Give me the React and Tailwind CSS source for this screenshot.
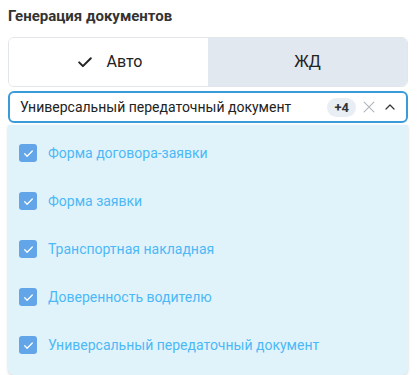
import { useState } from 'react'

const docs = [
  'Форма договора-заявки',
  'Форма заявки',
  'Транспортная накладная',
  'Доверенность водителю',
  'Универсальный передаточный документ',
]

const CheckIcon = ({ className }) => (
  <svg viewBox="0 0 24 24" className={className} fill="none" stroke="currentColor" strokeWidth={2.4} strokeLinecap="round" strokeLinejoin="round">
    <path d="M5 12.5l4.5 4.5L19 7.5" />
  </svg>
)

export default function App() {
  const [mode, setMode] = useState('auto')
  const [checked, setChecked] = useState(docs.map(() => true))

  return (
    <div className="w-[417px] h-[375px] bg-white px-2 pt-[5px]" style={{ fontFamily: 'Roboto, "Noto Sans", sans-serif' }}>
      <h2 className="text-[15px] font-bold text-[#333] leading-[22px]">Генерация документов</h2>

      {/* mode toggle */}
      <div className="mt-[10px] flex h-[50px] w-[400px] rounded-md overflow-hidden border border-[#e2e6ea]">
        <button
          onClick={() => setMode('auto')}
          className="flex-1 flex items-center justify-center gap-3 bg-white text-[16px] text-[#222]"
        >
          <CheckIcon className="w-5 h-5 text-[#222]" />
          Авто
        </button>
        <button
          onClick={() => setMode('rail')}
          className="flex-1 flex items-center justify-center bg-[#e2e8f0] text-[16px] text-[#222]"
        >
          ЖД
        </button>
      </div>

      {/* select */}
      <div className="mt-[4px] w-[400px] h-[32px] flex items-center rounded-md border-2 border-[#3a9bd8] pl-[10px] pr-2">
        <span className="flex-1 text-[14px] text-[#222] truncate">Универсальный передаточный документ</span>
        <span className="px-[7px] h-[19px] leading-[19px] rounded-full bg-[#e8eef4] text-[13px] font-bold text-[#333]">+4</span>
        <svg viewBox="0 0 24 24" className="w-[18px] h-[18px] ml-[4px] text-[#b0b6bc]" fill="none" stroke="currentColor" strokeWidth={1.5} strokeLinecap="round">
          <path d="M5.5 5.5l13 13M18.5 5.5l-13 13" />
        </svg>
        <svg viewBox="0 0 24 24" className="w-[16px] h-[16px] ml-[4px] text-[#333]" fill="none" stroke="currentColor" strokeWidth={1.8} strokeLinecap="round" strokeLinejoin="round">
          <path d="M6 15l6-6 6 6" />
        </svg>
      </div>

      {/* dropdown */}
      <div className="mt-[2px] w-[400px] rounded-b-md bg-[#e1f3fa] shadow-[0_1px_3px_rgba(0,0,0,0.18)] pt-[4px] pb-[6px]">
        {docs.map((d, i) => (
          <label key={d} className="flex items-center h-[48px] pl-[11px] gap-[11px] cursor-pointer">
            <span
              onClick={() => setChecked(c => c.map((v, j) => (j === i ? !v : v)))}
              className="w-[18px] h-[18px] rounded-[3px] bg-[#62a5e8] flex items-center justify-center"
            >
              {checked[i] && <CheckIcon className="w-[13px] h-[13px] text-white" />}
            </span>
            <span className="text-[14px] text-[#4cb9f6]">{d}</span>
          </label>
        ))}
      </div>
    </div>
  )
}
